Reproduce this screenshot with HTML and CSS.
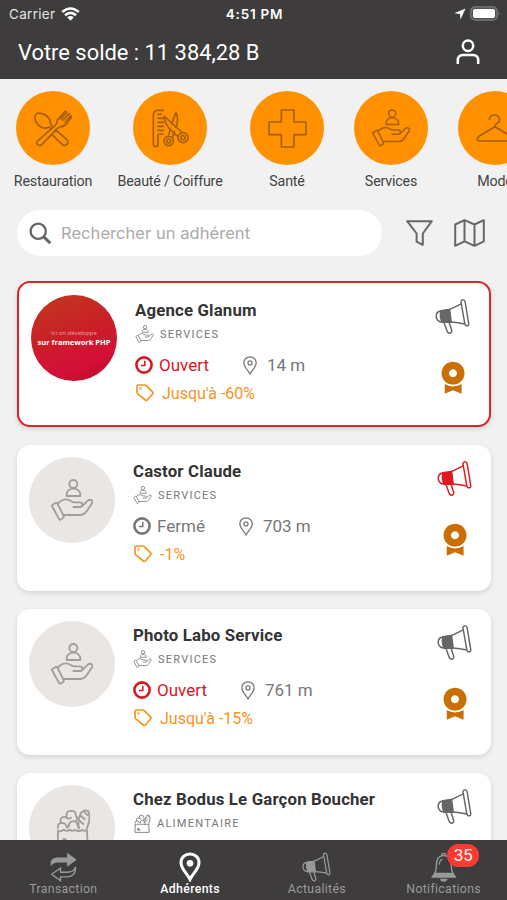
FILE: index.html
```html
<!DOCTYPE html>
<html lang="fr">
<head>
<meta charset="utf-8">
<title>Adhérents</title>
<link rel="stylesheet" href="styles.css">
</head>
<body>
<svg class="defs" width="0" height="0">
  <symbol id="hand" viewBox="-1 -1 126 126">
    <circle cx="66" cy="14" r="12"/>
    <path d="M46 50V45C46 36 54 28 66 28S87 36 87 45V50Z"/>
    <path d="M3 77L14 70Q16 69 18 72L37 110Q38 113 36 115L27 121Q25 122 23 119L2 80Q1 78 3 77Z"/>
    <path d="M18 74C26 65 34 60 44 60C56 60 60 69 70 69H86C95 69 95 83 86 83H64M93 80L109 64C116 58 127 63 122 72L106 96C100 105 96 107 88 107H36"/>
  </symbol>
  <symbol id="mega" viewBox="612 72 108 110">
    <path d="M692 81Q693 75 699 75Q704 76 705 82L716 148Q717 155 711 156Q705 156 704 150Z"/>
    <path d="M693 88L658 105M704 150Q682 145 662 144M640 146L650 174Q654 180 660 178Q665 174 663 168L656 146M630 110Q614 112 616 130Q620 144 634 144"/>
    <path class="solid" d="M630 109L657 105L662 145L634 145Q626 128 630 109Z"/>
  </symbol>
  <symbol id="ribbon" viewBox="630 262 72 100">
    <path class="fill" fill-rule="evenodd" d="M666 264a35 35 0 1 0 .1 0ZM666 287a12 12 0 1 1-.1 0Z"/>
    <path class="fill" d="M641 332Q666 346 692 332V361L666 351L641 361Z"/>
    <path class="gap" d="M638 328Q666 344 694 328"/>
  </symbol>
  <symbol id="clock" viewBox="0 0 18 18"><circle cx="9" cy="9" r="7.600"/><path class="thin" d="M9.800 4.800V9.600H6"/></symbol>
  <symbol id="pin" viewBox="0 0 14 19"><path d="M7 .8C3.500 .8.8 3.500.8 6.800C.8 11 5.300 14.500 7 18C8.700 14.500 13.200 11 13.200 6.800C13.200 3.500 10.500.8 7 .8Z"/><circle cx="7" cy="6.900" r="2"/></symbol>
  <symbol id="tag" viewBox="0 0 18 18"><path d="M1 2.500Q1 1 2.500 1H8.600Q9.500 1 10.200 1.700L16.500 7.800Q17.500 9 16.500 10L11.600 15.800Q10.500 17 9.300 16L1.800 9.800Q1 9 1 8Z"/><circle cx="4.500" cy="4.500" r=".4"/></symbol>
  <symbol id="bag" viewBox="130 120 104 120">
    <path d="M139 183L138 236H227L225 183M139 188Q148 190 156 184Q166 190 174 184Q182 190 190 184Q202 192 210 184Q220 190 226 183"/>
    <path d="M140 180Q134 166 148 164Q142 150 154 146Q160 144 164 148Q162 126 178 128Q192 126 192 142Q200 148 192 158M164 148Q176 154 178 146M148 164Q164 162 166 180M170 178Q170 160 184 158Q198 158 198 178"/>
    <path d="M202 182Q196 158 206 136Q216 122 228 128Q236 140 230 164L224 182M206 142L220 154M202 156L216 168M216 130L228 142M152 212H164M152 217H168M152 222H172"/>
  </symbol>
</svg>

<div class="screen">
  <header class="top">
    <div class="status">
      <div class="carrier">Carrier
        <svg width="19" height="14" viewBox="0 0 19 14"><path d="M1.200 5Q9.500-2 17.800 5M4 8.200Q9.500 3.500 15 8.200" fill="none" stroke="#fff" stroke-width="2.500"/><path d="M6.200 10.300Q9.500 7.500 12.800 10.300L9.500 13.700Z" fill="#fff"/></svg>
      </div>
      <div class="time">4:51 PM</div>
      <div class="power">
        <svg width="12" height="12" viewBox="0 0 12 12"><path d="M11.500.5L.3 5.300L6 6L6.500 11.500Z" fill="#fff"/></svg>
        <svg width="30" height="15" viewBox="0 0 30 15"><rect x=".8" y=".8" width="26.400" height="13.400" rx="4.300" fill="#555455" stroke="#7b7a7a" stroke-width="1.200"/><rect x="3" y="3" width="22" height="9" rx="1.800" fill="#fff"/><path d="M28.500 5.500Q30 7.500 28.500 9.500Z" fill="#8b8a8a"/></svg>
      </div>
    </div>
    <div class="balance">
      <h1>Votre solde : 11 384,28 B</h1>
      <svg width="24" height="26" viewBox="0 0 24 26" fill="none" stroke="#fff" stroke-width="2.500"><circle cx="12" cy="6.700" r="5.200"/><path d="M1.800 25V21.500Q1.800 16 7.200 16H16.800Q22.200 16 22.200 21.500V25"/></svg>
    </div>
  </header>

  <nav class="cats">
    <a class="cat"><span class="disc"><svg width="39" height="38" viewBox="100 85 118 114">
      <path d="M145 139C132 148 112 138 105 121C99 105 106 96 116 97C134 98 151 112 150 130L156 138M145 139L152 144M164 146L200 178Q206 188 198 193Q191 198 184 190L152 160M162 136L112 180Q104 187 112 193Q119 198 126 190L170 144M162 136L168 130Q168 118 178 109L196 90M170 144L180 138Q192 138 200 128L214 108M180 116L199 96M186 120L206 98M193 126L211 104M196 90L199 96M206 98L209 101M211 104L214 108"/></svg></span>Restauration</a>
    <a class="cat"><span class="disc"><svg width="37" height="39" viewBox="454 85 111 117">
      <path d="M490 89H470Q458 90 458 104V190Q458 198 465 198Q472 198 472 190V164Q472 160 476 160H488M470 101H484M470 113H488M470 125H490M470 137H490M470 149H490M490 106Q490 130 516 154L532 168M490 106L546 157M526 96Q534 112 528 134L522 140M526 96L512 132M509 143L504 164M522 150L516 170"/>
      <circle cx="504" cy="181" r="14"/><circle cx="504" cy="181" r="6"/><circle cx="547" cy="171" r="15"/><circle cx="547" cy="171" r="6"/></svg></span>Beauté / Coiffure</a>
    <a class="cat"><span class="disc"><svg width="39" height="39" viewBox="0 0 117 117"><path d="M40 3H78V39H114V77H78V114H40V77H3V39H40Z"/></svg></span>Santé</a>
    <a class="cat"><span class="disc"><svg width="38" height="38"><use href="#hand"/></svg></span>Services</a>
    <a class="cat"><span class="disc"><svg width="40" height="29" viewBox="0 0 120 87"><path d="M43 18C43 8 51 3 60 3S75 11 73 20C70 30 59 26 60 38M60 38L108 67Q120 80 106 81H14Q0 80 12 67Z"/></svg></span>Mode</a>
  </nav>

  <div class="find">
    <label class="box">
      <svg width="23" height="23" viewBox="0 0 23 23" fill="none" stroke="#666" stroke-width="2.300"><circle cx="9.200" cy="9.200" r="7.600"/><path d="M14.600 14.600L21.300 21.300" stroke-width="3"/></svg>
      <span>Rechercher un adhérent</span>
    </label>
    <svg class="filter" width="27" height="26" viewBox="0 0 27 26"><path d="M1.200 1.200H25.800L16.800 13.500V24.800L10.600 21.700V13.500Z"/></svg>
    <svg class="map" width="31" height="28" viewBox="0 0 31 28"><path d="M1.200 5.500L10.500 1.200L20.500 5.500L29.800 1.200V22.300L20.500 26.800L10.500 22.300L1.200 26.800ZM10.500 1.200V22.300M20.500 5.500V26.800"/></svg>
  </div>

  <main class="list">
    <article class="card featured">
      <div class="avatar brand"><small>Ici on développe</small><b>sur framework PHP</b></div>
      <div class="info">
        <h2>Agence Glanum</h2>
        <p class="kind"><svg width="19" height="18"><use href="#hand"/></svg>SERVICES</p>
        <p class="facts"><span class="state open"><svg width="18" height="18"><use href="#clock"/></svg>Ouvert</span><span class="dist"><svg width="14" height="19"><use href="#pin"/></svg>14 m</span></p>
        <p class="deal"><svg width="18" height="18"><use href="#tag"/></svg>Jusqu'à -60%</p>
      </div>
      <div class="side"><svg class="mega" width="35" height="37"><use href="#mega"/></svg><svg class="award" width="24" height="33"><use href="#ribbon"/></svg></div>
    </article>

    <article class="card">
      <div class="avatar"><svg width="42" height="42"><use href="#hand"/></svg></div>
      <div class="info">
        <h2>Castor Claude</h2>
        <p class="kind"><svg width="19" height="18"><use href="#hand"/></svg>SERVICES</p>
        <p class="facts"><span class="state"><svg width="18" height="18"><use href="#clock"/></svg>Fermé</span><span class="dist"><svg width="14" height="19"><use href="#pin"/></svg>703 m</span></p>
        <p class="deal"><svg width="18" height="18"><use href="#tag"/></svg>-1%</p>
      </div>
      <div class="side"><svg class="mega hot" width="35" height="37"><use href="#mega"/></svg><svg class="award" width="24" height="33"><use href="#ribbon"/></svg></div>
    </article>

    <article class="card">
      <div class="avatar"><svg width="42" height="42"><use href="#hand"/></svg></div>
      <div class="info">
        <h2>Photo Labo Service</h2>
        <p class="kind"><svg width="19" height="18"><use href="#hand"/></svg>SERVICES</p>
        <p class="facts"><span class="state open"><svg width="18" height="18"><use href="#clock"/></svg>Ouvert</span><span class="dist"><svg width="14" height="19"><use href="#pin"/></svg>761 m</span></p>
        <p class="deal"><svg width="18" height="18"><use href="#tag"/></svg>Jusqu'à -15%</p>
      </div>
      <div class="side"><svg class="mega" width="35" height="37"><use href="#mega"/></svg><svg class="award" width="24" height="33"><use href="#ribbon"/></svg></div>
    </article>

    <article class="card">
      <div class="avatar"><svg width="35" height="41"><use href="#bag"/></svg></div>
      <div class="info">
        <h2>Chez Bodus Le Garçon Boucher</h2>
        <p class="kind"><svg width="18" height="19"><use href="#bag"/></svg>ALIMENTAIRE</p>
      </div>
      <div class="side"><svg class="mega" width="35" height="37"><use href="#mega"/></svg></div>
    </article>
  </main>

  <footer class="tabs">
    <a class="tab"><svg width="27" height="30" viewBox="122 259 82 90"><path fill="#9b9a9a" stroke="none" d="M124 302V294C124 280 132 275 148 275H174V261L203 282L174 303V290H150C136 290 130 293 124 302Z"/><path fill="none" stroke="#9b9a9a" stroke-width="4" d="M200 304C200 324 190 334 172 334H154V346L127 326L154 307V320H174C190 320 196 314 200 304Z"/></svg>Transaction</a>
    <a class="tab active"><svg width="22" height="30" viewBox="509 260 66 90"><path fill="none" stroke="#fff" stroke-width="9" d="M542 266C527 266 515 277 515 292C515 311 533 323 542 342C551 323 569 311 569 292C569 277 557 266 542 266Z"/><circle cx="542" cy="294" r="10" fill="#fff"/></svg>Adhérents</a>
    <a class="tab"><svg class="mega" width="29" height="30"><use href="#mega"/></svg>Actualités</a>
    <a class="tab bell"><svg width="26" height="30" viewBox="542 260 78 90"><path fill="none" stroke="#9b9a9a" stroke-width="4" d="M552 326Q558 318 558 300C558 282 566 271 580 271S603 282 603 300Q603 318 609 326M574 271Q574 264 580 264T587 271M567 298Q567 286 576 281"/><path fill="#9b9a9a" d="M552 322H609L619 337H542ZM569 340H592Q590 349 580 349T569 340Z"/></svg>Notifications<span class="badge">35</span></a>
  </footer>
</div>
</body>
</html>
```

FILE: styles.css
```css
* { box-sizing: border-box; }
body { margin: 0; font-family: Roboto, "Liberation Sans", sans-serif; color: #333; }
h1, h2, p { margin: 0; font-weight: 400; }
svg { display: block; flex: none; }
.defs { position: absolute; }

.screen { width: 507px; height: 900px; overflow: hidden; display: flex; flex-direction: column; background: #f1f1f1; }

.top { flex: none; height: 79px; background: #3e3c3d; color: #fff; }
.status { display: grid; grid-template-columns: 1fr auto 1fr; align-items: center; height: 27px; padding: 0 7px 0 9px; font-family: Inter, sans-serif; font-size: 13.500px; }
.carrier { display: flex; align-items: center; gap: 6px; letter-spacing: .3px; color: #e4e4e4; }
.time { font-weight: 600; font-size: 13.500px; letter-spacing: .75px; }
.power { display: flex; justify-content: flex-end; align-items: center; gap: 4px; }
.balance { display: flex; justify-content: space-between; align-items: center; height: 50px; padding: 0 27px 0 18px; }
.balance h1 { font-size: 21.900px; white-space: nowrap; }

.cats { flex: none; display: grid; grid-template-columns: 106px 128px 106px 102px 106px; height: 121px; padding-top: 12px; overflow: hidden; }
.cat { display: flex; flex-direction: column; align-items: center; gap: 7px; font-size: 14.300px; line-height: 18px; letter-spacing: -.2px; color: #444; white-space: nowrap; }
.disc { width: 74px; height: 74px; border-radius: 50%; background: #ff9100; display: flex; align-items: center; justify-content: center; color: #a55f08; }
.disc svg { fill: none; stroke: currentColor; stroke-width: 5; stroke-linejoin: round; }

.find { flex: none; display: flex; align-items: center; height: 46px; margin-top: 10px; padding-left: 17px; }
.box { width: 365px; height: 46px; border-radius: 23px; background: #fff; display: flex; align-items: center; gap: 9px; padding-left: 12px; font-family: Inter, sans-serif; font-size: 16.500px; letter-spacing: .05px; color: #aaa; }
.filter, .map { fill: none; stroke: #666; stroke-width: 2; stroke-linejoin: round; }
.filter { margin-left: 24px; }
.map { margin-left: 21px; }

.list { flex: 1; min-height: 0; overflow: hidden; display: flex; flex-direction: column; gap: 18px; padding: 25px 16px 0 17px; }
.card { flex: none; height: 146px; display: flex; padding: 12px; border-radius: 13px; background: #fff; box-shadow: 0 2px 5px rgba(0,0,0,.13); }
.featured { border: 2.500px solid #d9252d; }
.avatar { flex: none; width: 86px; height: 86px; border-radius: 50%; background: #e9e6e4; display: flex; flex-direction: column; align-items: center; justify-content: center; color: #a09d9b; }
.avatar svg, .kind svg { fill: none; stroke: currentColor; stroke-width: 5.500; stroke-linejoin: round; }
.brand { background: linear-gradient(160deg, #c0391c 0%, #cb1f28 45%, #d50f38 75%, #b50f25 100%); color: #fff; white-space: nowrap; font-family: "Open Sans", sans-serif; line-height: 9px; }
.brand small { font-size: 6px; color: #eba5a5; }
.brand b { font-size: 7.500px; }

.info { flex: 1; min-width: 0; margin-left: 18px; padding-top: 3px; }
.featured .info { padding-top: 4px; }
.info h2 { font-size: 16.800px; line-height: 22px; font-weight: 700; letter-spacing: .17px; color: #333; white-space: nowrap; }
.kind { display: flex; align-items: center; gap: 6px; height: 18px; margin-top: 4px; font-size: 11px; letter-spacing: 1.250px; color: #777; }
.kind svg { color: #777; stroke-width: 5.500; }
.facts { display: flex; align-items: center; height: 26px; margin-top: 9px; font-size: 17px; color: #777; }
.state { display: flex; align-items: center; gap: 6px; margin-right: 34px; }
.state svg { fill: none; stroke: currentColor; stroke-width: 2.600; }
.state .thin, .thin { stroke-width: 1.500; }
.open { color: #d9151f; }
.dist { display: flex; align-items: center; gap: 10px; }
.dist svg { fill: none; stroke: #777; stroke-width: 1.300; }
.deal { display: flex; align-items: center; gap: 8px; height: 26px; margin-top: 2px; padding-left: 1px; font-size: 16px; color: #f79420; }
.deal svg { fill: none; stroke: currentColor; stroke-width: 1.700; }

.side { flex: none; width: 35px; margin-right: 7px; padding-top: 3px; display: flex; flex-direction: column; align-items: center; gap: 26px; }
.mega { fill: none; stroke: currentColor; stroke-width: 4.500; color: #666; }
.mega.hot { color: #e01920; }
.solid { fill: currentColor; }
.award { color: #c96f04; }
.fill { fill: currentColor; stroke: none; }
.gap { fill: none; stroke: #fff; stroke-width: 3; }

.tabs { flex: none; height: 60px; display: grid; grid-template-columns: repeat(4, 1fr); background: #3e3c3d; }
.tab { position: relative; display: flex; flex-direction: column; align-items: center; padding-top: 12px; font-size: 12.300px; line-height: 14px; letter-spacing: .33px; color: #9b9a9a; }
.tab .mega { color: #9b9a9a; }
.tab.active { color: #fff; font-weight: 500; letter-spacing: .35px; }
.badge { position: absolute; left: 67px; top: 4px; width: 32px; height: 23px; border-radius: 12px; background: #fe3b30; color: #fff; font-family: Inter, sans-serif; font-size: 16px; line-height: 23px; text-align: center; letter-spacing: 0; }
```
